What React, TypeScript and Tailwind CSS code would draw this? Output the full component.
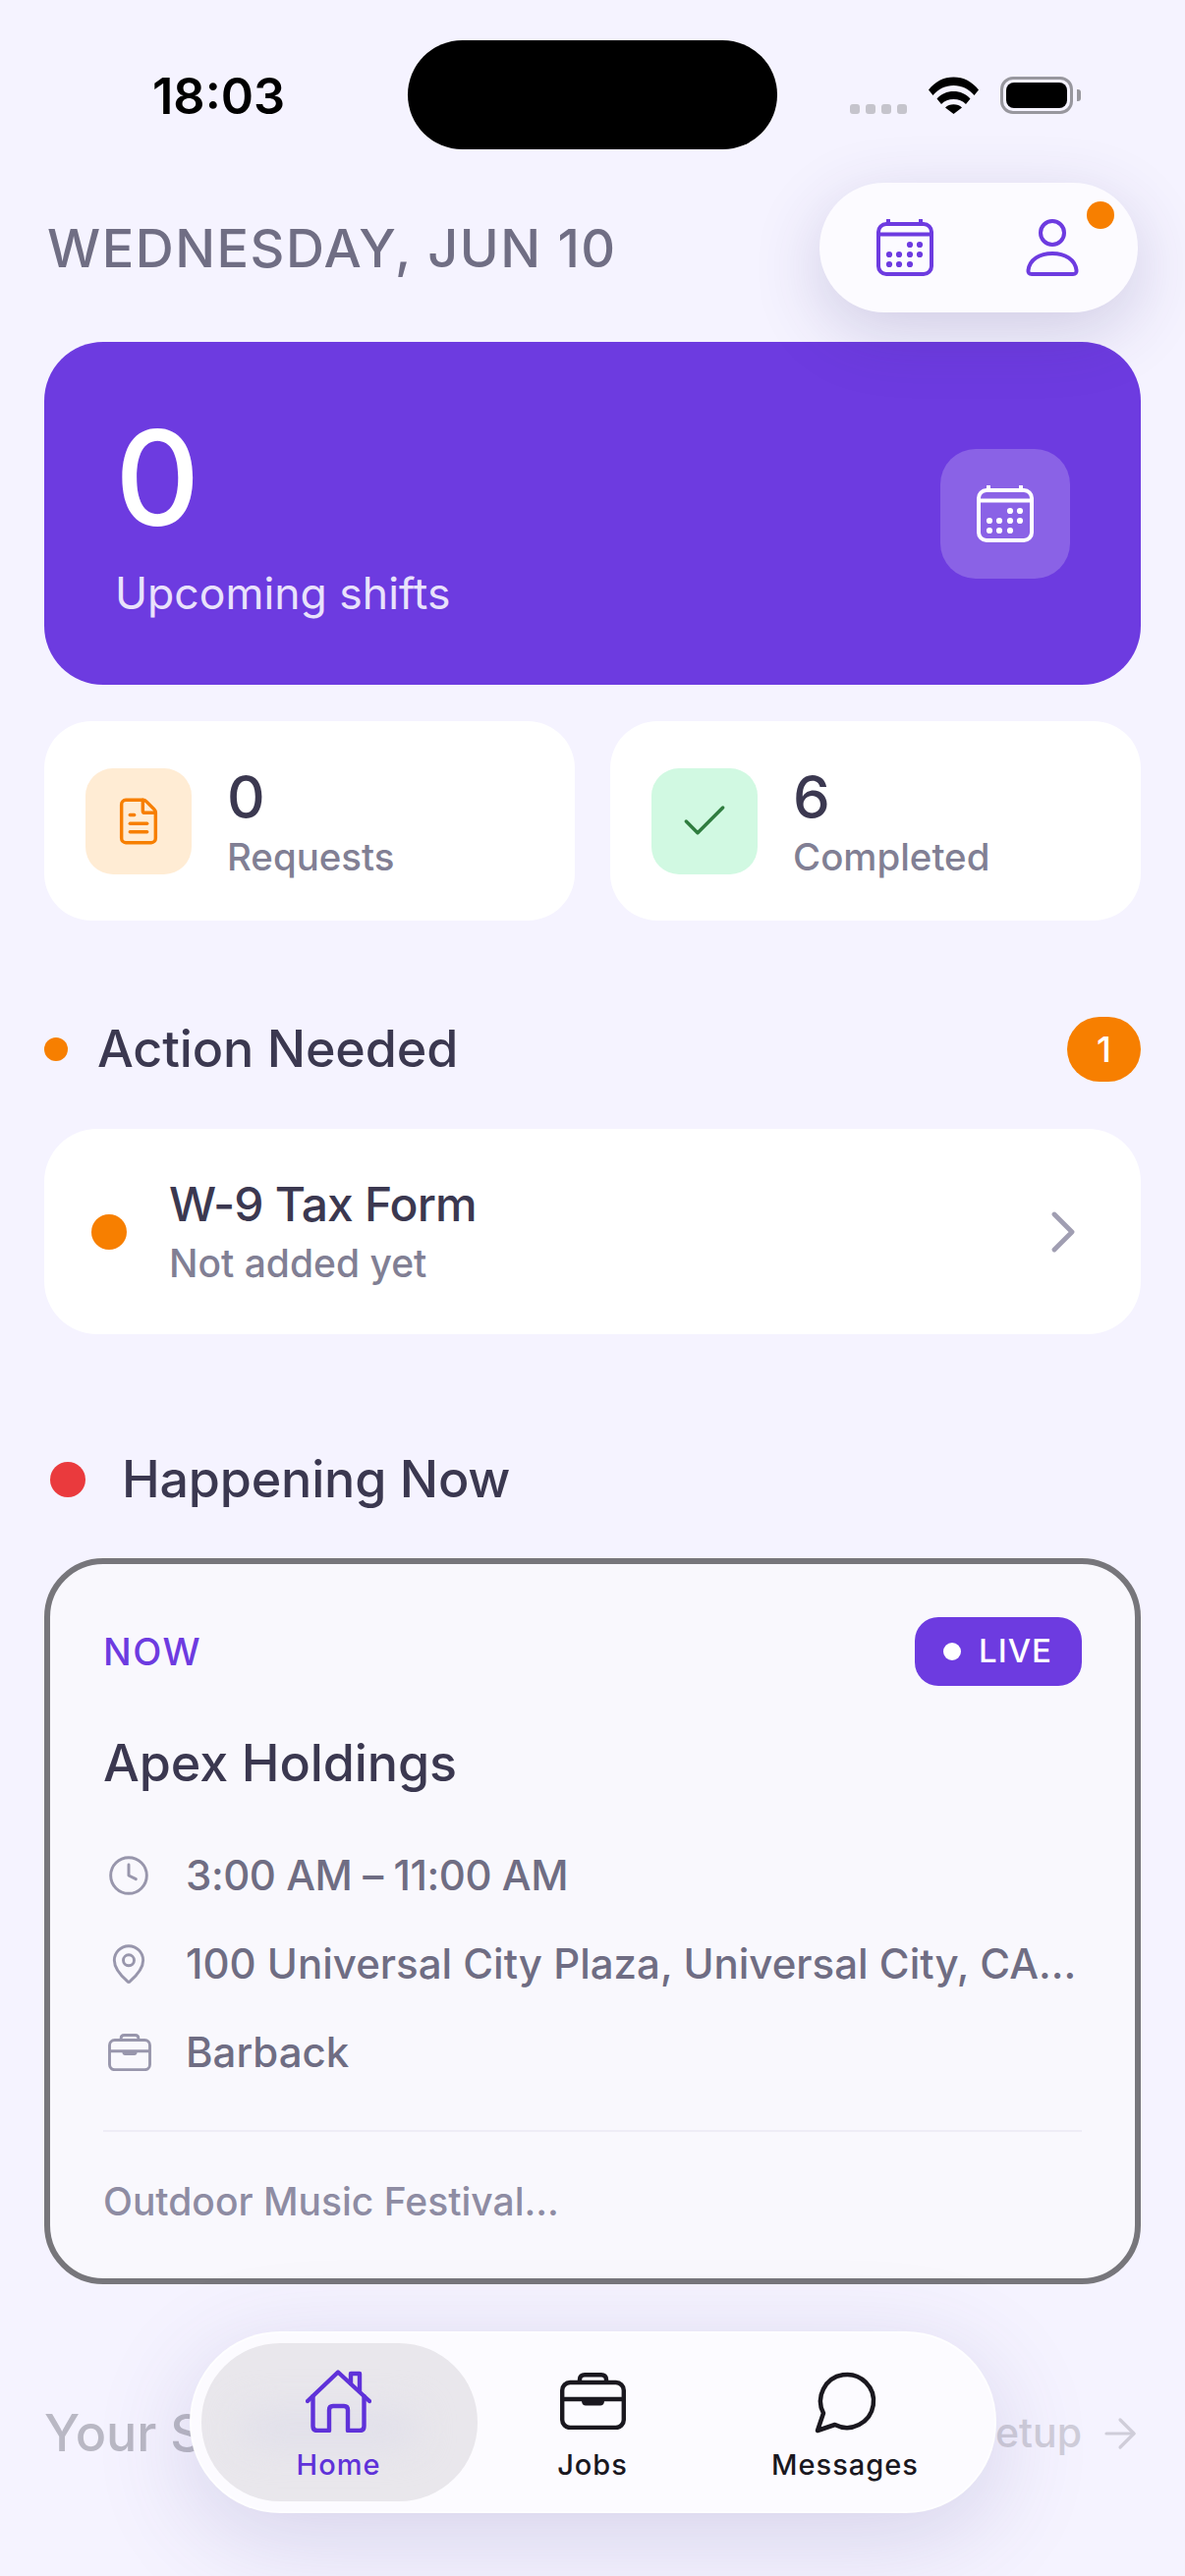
import React from "react";
import { Check, ChevronRight, Clock, FileText, MapPin, ArrowRight } from "lucide-react";

function CalendarGlyph({ className }: { className?: string }) {
  const dots = [
    [34, 26], [44, 26],
    [13, 36], [23, 36], [34, 36], [44, 36],
    [13, 46], [23, 46], [34, 46],
  ];
  return (
    <svg viewBox="0 0 58 58" className={className} fill="none" stroke="currentColor">
      <rect x="2" y="5" width="54" height="51" rx="8" strokeWidth="4" />
      <path d="M2 15.5H56" strokeWidth="4" />
      <path d="M12 1V5M45 1V5" strokeWidth="4" strokeLinecap="round" />
      {dots.map(([x, y]) => (
        <circle key={`${x}-${y}`} cx={x} cy={y} r="3.1" fill="currentColor" stroke="none" />
      ))}
    </svg>
  );
}

function PersonGlyph({ className }: { className?: string }) {
  return (
    <svg viewBox="0 0 54 58" className={className} fill="none" stroke="currentColor" strokeWidth="4">
      <circle cx="27" cy="14" r="12" />
      <path d="M2.5 52C4 41 14 35 27 35C40 35 50 41 51.5 52C51.9 54.6 50.5 56 48 56H6C3.5 56 2.1 54.6 2.5 52Z" />
    </svg>
  );
}

function CaseGlyph({ className }: { className?: string }) {
  return (
    <svg viewBox="0 0 67 58" className={className} fill="none" stroke="currentColor" strokeWidth="4.4">
      <rect x="2.2" y="10" width="62.6" height="46" rx="8" />
      <path d="M20 10V7C20 4 22 2.2 25 2.2H42C45 2.2 47 4 47 7V10" />
      <path d="M2.5 27H64.5" />
      <path d="M22 27H45V29C45 32 43 33.5 41 33.5H26C24 33.5 22 32 22 29Z" fill="currentColor" stroke="none" />
    </svg>
  );
}

function HouseGlyph({ className }: { className?: string }) {
  return (
    <svg viewBox="0 0 67 64" className={className} fill="none" stroke="currentColor" strokeWidth="4.4" strokeLinecap="round" strokeLinejoin="round">
      <path d="M2 32L33 2.5L65 32" />
      <path d="M7.5 27V57.5C7.5 60.5 9 62 12 62H24V41C24 38.5 25.5 37 28 37H39C41.5 37 43 38.5 43 41V62H55C58 62 59.5 60.5 59.5 57.5V27" />
      <path d="M46 14V4H55V22" />
    </svg>
  );
}

function WifiGlyph() {
  return (
    <svg viewBox="0 0 51 38" className="h-[38px] w-[51px]" fill="#000">
      <path d="M0 13.5C6.5 5 15.5 0.5 25.5 0.5S44.5 5 51 13.5L46.5 19C41 12.5 33.8 9 25.5 9S10 12.5 4.5 19Z" />
      <path d="M8.5 22.5C12.8 17.5 18.8 15 25.5 15S38.2 17.5 42.5 22.5L38 28C34.8 24.6 30.5 23 25.5 23S16.2 24.6 13 28Z" />
      <path d="M17 31.5C19.2 29.3 22.2 28.2 25.5 28.2S31.8 29.3 34 31.5L25.5 38Z" />
    </svg>
  );
}

function StatusBar() {
  return (
    <div className="flex h-[152px] items-start pl-[155px]">
      <div className="w-[260px] pt-[70px] text-[50.5px] leading-[56px] font-semibold text-black">18:03</div>
      <div className="mt-[41px] h-[111px] w-[376px] rounded-[56px] bg-black" />
      <div className="ml-[74px] mt-[78px] flex items-end">
        <div className="flex gap-[6px]">
          {[0, 1, 2, 3].map((i) => (
            <span key={i} className="h-[10px] w-[10px] rounded-[3px] bg-[#c5c4cc]" />
          ))}
        </div>
        <div className="ml-[22px]"><WifiGlyph /></div>
        <div className="ml-[22px] flex items-center">
          <div className="flex h-[38px] w-[74px] rounded-[13px] border-[3px] border-[#98979e] p-[3px]">
            <div className="flex-1 rounded-[8px] bg-black" />
          </div>
          <div className="ml-[4px] h-[12px] w-[4px] rounded-r-[3px] bg-[#98979e]" />
        </div>
      </div>
    </div>
  );
}

function StatCard({ icon, tint, value, label }: { icon: React.ReactNode; tint: string; value: string; label: string }) {
  return (
    <div className="flex h-[203px] items-center gap-[36px] rounded-[48px] bg-white pl-[42px]">
      <div className={`flex h-[108px] w-[108px] items-center justify-center rounded-[28px] ${tint}`}>{icon}</div>
      <div className="pt-[4px]">
        <div className="text-[60px] leading-[66px] font-medium text-[#3b3850]">{value}</div>
        <div className="mt-[3px] text-[38.4px] leading-[50px] font-medium text-[#817f94]">{label}</div>
      </div>
    </div>
  );
}

function DetailRow({ icon, text, tight }: { icon: React.ReactNode; text: string; tight?: boolean }) {
  return (
    <div className="flex h-[54px] items-center">
      <div className="flex w-[84px] items-center pl-[4px] text-[#9896ac]">{icon}</div>
      <div className={`truncate text-[42px] leading-[54px] font-medium text-[#6f6d83] ${tight ? "tracking-[-0.45px]" : ""}`}>{text}</div>
    </div>
  );
}

function NavItem({ icon, label, width, active }: { icon: React.ReactNode; label: string; width: string; active?: boolean }) {
  return (
    <div
      className={`relative flex h-[161px] flex-col items-center justify-center overflow-hidden pt-[8px] ${width} ${
        active ? "rounded-[80px] bg-[#e9e7ec] pr-[2px] text-[#5f32d9]" : "text-[#1a181f]"
      }`}
    >
      {active && <div className="absolute left-[40px] top-[70px] h-[34px] w-[180px] rounded-full bg-[#e0dfea] blur-[18px]" />}
      <div className="relative flex h-[64px] items-center">{icon}</div>
      <div className="relative mt-[15px] text-[29px] leading-[36px] font-medium tracking-[1px]">{label}</div>
    </div>
  );
}

export default function App() {
  return (
    <div className="relative h-[2622px] w-[1206px] overflow-hidden bg-[#f5f3ff] font-['Inter',sans-serif]">
      <StatusBar />

      {/* Date and quick actions */}
      <div className="relative z-10 mt-[34px] flex h-[132px] items-center justify-between px-[48px]">
        <div className="pt-[2px] text-[54px] leading-[60px] font-medium tracking-[1.5px] text-[#706e84]">WEDNESDAY, JUN 10</div>
        <div className="relative flex h-[132px] w-[324px] items-center rounded-[66px] bg-[#fcfbff] pl-[58px] shadow-[0_20px_70px_rgba(60,50,120,0.2)]">
          <CalendarGlyph className="h-[58px] w-[58px] text-[#6d3be0]" />
          <PersonGlyph className="ml-[94px] h-[58px] w-[54px] text-[#6d3be0]" />
          <span className="absolute right-[24px] top-[19px] h-[28px] w-[28px] rounded-full bg-[#f77f00]" />
        </div>
      </div>

      {/* Upcoming shifts */}
      <div className="mx-[45px] mt-[30px] flex h-[349px] items-center justify-between rounded-[60px] bg-[#6d3be0] pl-[72px] pr-[72px]">
        <div className="mt-[5px]">
          <div className="text-[134px] leading-[134px] font-medium text-white">0</div>
          <div className="mt-[23px] text-[44.5px] leading-[56px] text-[#e9e2fb]">Upcoming shifts</div>
        </div>
        <div className="flex h-[132px] w-[132px] items-center justify-center rounded-[36px] bg-white/20">
          <CalendarGlyph className="h-[58px] w-[58px] text-white" />
        </div>
      </div>

      {/* Counters */}
      <div className="mx-[45px] mt-[37px] grid grid-cols-2 gap-[36px]">
        <StatCard
          tint="bg-[#ffecd4]"
          value="0"
          label="Requests"
          icon={<FileText className="h-[52px] w-[52px] text-[#f77f00]" strokeWidth={1.6} />}
        />
        <StatCard
          tint="bg-[#d1f9e2]"
          value="6"
          label="Completed"
          icon={<Check className="h-[56px] w-[56px] text-[#2f7d3f]" strokeWidth={1.5} />}
        />
      </div>

      {/* Action needed */}
      <div className="mx-[45px] mt-[98px] flex h-[66px] items-center">
        <span className="h-[24px] w-[24px] rounded-full bg-[#f77f00]" />
        <div className="ml-[30px] flex-1 text-[52px] leading-[66px] font-medium tracking-[-0.15px] text-[#3b3850]">Action Needed</div>
        <div className="flex h-[66px] w-[75px] items-center justify-center rounded-full bg-[#f77f00] text-[36px] font-medium text-white">1</div>
      </div>
      <div className="mx-[45px] mt-[48px] flex h-[209px] items-center rounded-[54px] bg-white pl-[48px] pr-[43px]">
        <span className="h-[36px] w-[36px] rounded-full bg-[#f77f00]" />
        <div className="ml-[43px] flex-1">
          <div className="text-[48px] leading-[60px] font-medium tracking-[-0.85px] text-[#3b3850]">W-9 Tax Form</div>
          <div className="mt-[5px] text-[39px] leading-[50px] font-medium text-[#817f94]">Not added yet</div>
        </div>
        <ChevronRight className="h-[72px] w-[72px] text-[#a09eb2]" strokeWidth={1.6} />
      </div>

      {/* Happening now */}
      <div className="mx-[51px] mt-[115px] flex h-[66px] items-center">
        <span className="h-[36px] w-[36px] rounded-full bg-[#ea3a3d]" />
        <div className="ml-[37px] text-[52px] leading-[66px] font-medium tracking-[-0.2px] text-[#3b3850]">Happening Now</div>
      </div>
      <div className="mx-[45px] mt-[47px] h-[739px] rounded-[60px] border-[6px] border-[#77767b] bg-[#f9f8fd] pl-[54px] pr-[54px] pt-[54px]">
        <div className="flex h-[70px] items-center justify-between">
          <div className="text-[38px] font-medium tracking-[1.5px] text-[#6d3be0]">NOW</div>
          <div className="flex h-[70px] w-[170px] items-center rounded-[24px] bg-[#6d3be0] pl-[29px]">
            <span className="h-[18px] w-[18px] rounded-full bg-white" />
            <span className="ml-[18px] text-[33px] font-medium tracking-[1px] text-white">LIVE</span>
          </div>
        </div>
        <div className="mt-[46px] text-[52px] leading-[66px] font-medium tracking-[-0.1px] text-[#3b3850]">Apex Holdings</div>
        <div className="mt-[54px] flex flex-col gap-[36px]">
          <DetailRow tight icon={<Clock className="h-[44px] w-[44px]" strokeWidth={1.6} />} text="3:00 AM – 11:00 AM" />
          <DetailRow icon={<MapPin className="h-[44px] w-[44px]" strokeWidth={1.6} />} text="100 Universal City Plaza, Universal City, CA..." />
          <DetailRow icon={<CaseGlyph className="ml-[1px] h-[38px] w-[44px]" />} text="Barback" />
        </div>
        <div className="mt-[52px] h-[2px] bg-[#eeecf6]" />
        <div className="mt-[46px] text-[39px] leading-[50px] font-medium text-[#8e8ca3]">Outdoor Music Festival...</div>
      </div>

      {/* Schedule heading, partly under the tab bar */}
      <div className="mx-[45px] mt-[119px] flex h-[66px] items-center justify-between">
        <div className="text-[52px] leading-[66px] font-medium text-[#b9b8c4]">Your Schedule</div>
        <div className="-mr-[3px] flex items-center gap-[15px] text-[41px] font-medium text-[#cfcdd9]">
          Setup
          <ArrowRight className="h-[48px] w-[48px]" strokeWidth={1.6} />
        </div>
      </div>

      {/* Tab bar */}
      <div className="absolute left-[193px] top-[2373px] flex h-[185px] w-[821px] items-center rounded-[92px] border-[2px] border-white/70 bg-[#fcfbff] pl-[10px] shadow-[0_24px_100px_rgba(70,60,140,0.18)]">
        <NavItem active width="w-[281px]" label="Home" icon={<HouseGlyph className="h-[64px] w-[67px]" />} />
        <NavItem width="w-[234px]" label="Jobs" icon={<CaseGlyph className="h-[58px] w-[67px]" />} />
        <NavItem
          width="w-[280px]"
          label="Messages"
          icon={
            <svg viewBox="1 1 22 22" className="ml-[3px] h-[66px] w-[66px]" fill="none" stroke="currentColor" strokeWidth="1.5" strokeLinejoin="round">
              <path d="M7.9 20A9 9 0 1 0 4 16.1L2 22Z" />
            </svg>
          }
        />
      </div>
    </div>
  );
}
